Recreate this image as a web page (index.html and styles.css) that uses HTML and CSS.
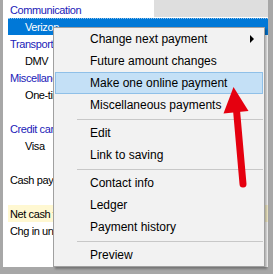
FILE: index.html
```html
<!DOCTYPE html>
<html>
<head>
<meta charset="utf-8">
<link rel="stylesheet" href="styles.css">
</head>
<body>
<div class="frame">
  <div class="list">
    <div class="row head"><span class="cat">Communication</span><span class="headfill"></span></div>
    <div class="row sel">Verizon</div>
    <div class="row cat">Transportation</div>
    <div class="row item">DMV</div>
    <div class="row cat">Miscellaneous</div>
    <div class="row item">One-time</div>
    <div class="row"></div>
    <div class="row cat">Credit cards</div>
    <div class="row item">Visa</div>
    <div class="row"></div>
    <div class="row total">Cash payments</div>
    <div class="row"></div>
    <div class="row total net">Net cash flow</div>
    <div class="row total">Chg in unpaid</div>
  </div>
  <div class="menu">
    <div class="mi">Change next payment<span class="sub"></span></div>
    <div class="mi">Future amount changes</div>
    <div class="mi hot">Make one online payment</div>
    <div class="mi">Miscellaneous payments</div>
    <div class="sep"></div>
    <div class="mi">Edit</div>
    <div class="mi">Link to saving</div>
    <div class="sep"></div>
    <div class="mi">Contact info</div>
    <div class="mi">Ledger</div>
    <div class="mi">Payment history</div>
    <div class="sep"></div>
    <div class="mi">Preview</div>
  </div>
  <svg class="arrow" width="273" height="274" viewBox="0 0 273 274">
    <line x1="236.5" y1="110" x2="243" y2="184" stroke="#e5000f" stroke-width="7" stroke-linecap="round"/>
    <polygon points="233.5,87 248.5,111 223.5,113.5" fill="#e5000f"/>
  </svg>
</div>
</body>
</html>
```
FILE: styles.css
```css
body {
  margin: 0;
}
.frame {
  position: relative;
  width: 273px;
  height: 274px;
  box-sizing: border-box;
  padding: 0 5px 7px 3px;
  background: #a7a7a7;
  font-family: "Liberation Sans", Arial, sans-serif;
}
.list {
  background: #ffffff;
  height: 267px;
}
.row {
  height: 17px;
  box-sizing: border-box;
  padding-top: 2px;
  line-height: 15px;
  font-size: 11px;
  letter-spacing: -0.4px;
  white-space: nowrap;
  overflow: hidden;
  color: #000;
}
.head {
  height: 18px;
  padding-top: 0;
  display: flex;
}
.head .cat {
  padding-top: 3px;
}
.headfill {
  margin-left: auto;
  width: 114px;
  height: 17px;
  background: #dedede;
}
.cat {
  color: #2121b8;
  padding-left: 7px;
}
.item {
  padding-left: 22px;
}
.sel {
  margin-left: 5px;
  padding-left: 17px;
  background: #0078d7;
  color: #fff;
  border-top: 1px dotted #8cc0ec;
  padding-top: 1px;
}
.total {
  padding-left: 7px;
}
.net {
  margin-left: 5px;
  padding-left: 2px;
  background: #fff8d2;
}
.menu {
  position: absolute;
  left: 53px;
  top: 27px;
  width: 212px;
  height: 240px;
  box-sizing: border-box;
  border: 1px solid #a0a0a0;
  background: #f2f2f2;
  box-shadow: 2px 2px 2px rgba(0, 0, 0, 0.3);
  font-size: 12px;
  color: #000;
}
.mi {
  display: flex;
  align-items: center;
  height: 22px;
  line-height: 22px;
  margin: 0 1px;
  padding-left: 35px;
  box-sizing: border-box;
  white-space: nowrap;
}
.mi.hot {
  background: #c4e0f6;
  border: 1px solid #8fc0e8;
  line-height: 20px;
  padding-left: 34px;
}
.sub {
  margin-left: auto;
  margin-right: 9px;
  width: 0;
  height: 0;
  border-left: 4px solid #000;
  border-top: 4px solid transparent;
  border-bottom: 4px solid transparent;
}
.sep {
  height: 6px;
  box-sizing: border-box;
  padding-top: 3px;
  margin: 0 1px 0 23px;
}
.sep::after {
  content: "";
  display: block;
  height: 1px;
  background: #c8c8c8;
}
.arrow {
  position: absolute;
  left: 0;
  top: 0;
  pointer-events: none;
}
```
